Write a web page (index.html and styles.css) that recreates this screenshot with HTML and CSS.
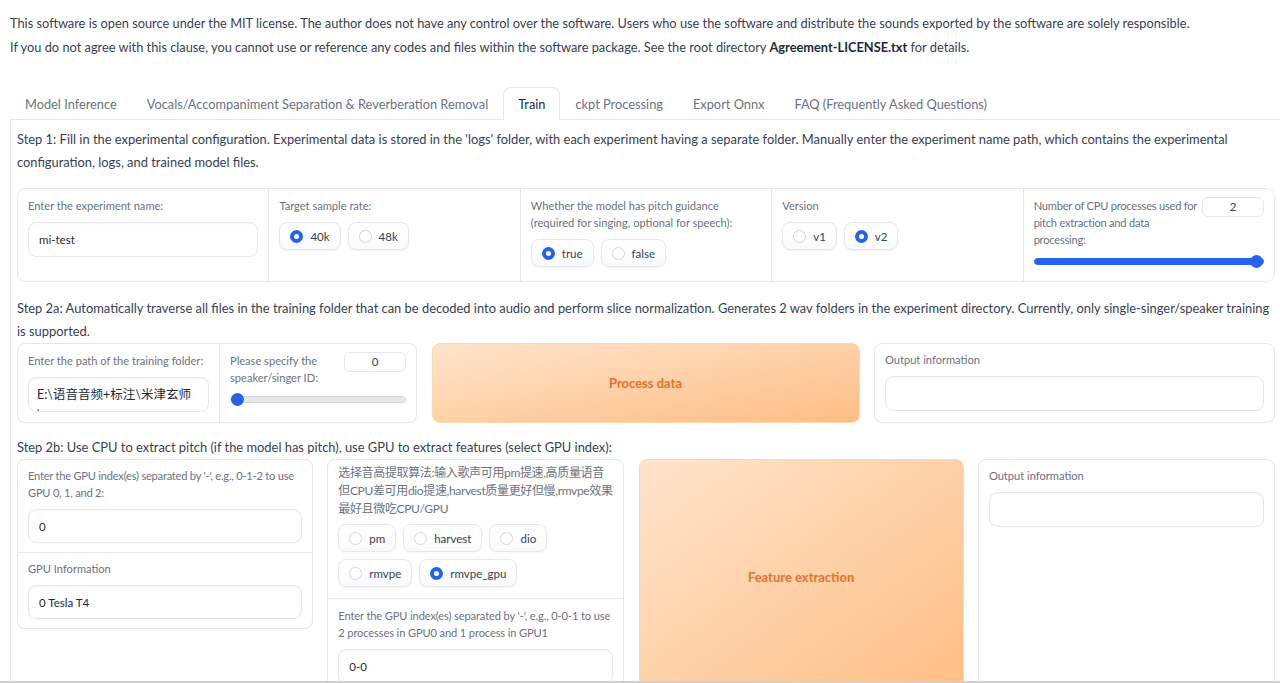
FILE: index.html
```html
<!DOCTYPE html>
<html lang="en">
<head>
<meta charset="utf-8">
<title>RVC WebUI - Train</title>
<link rel="stylesheet" href="styles.css">
</head>
<body>
<div class="app">
  <div class="notice">
    <p>This software is open source under the MIT license. The author does not have any control over the software. Users who use the software and distribute the sounds exported by the software are solely responsible.</p>
    <p>If you do not agree with this clause, you cannot use or reference any codes and files within the software package. See the root directory <strong>Agreement-LICENSE.txt</strong> for details.</p>
  </div>

  <div class="tabs">
    <div class="tab-nav">
      <button class="tab">Model Inference</button>
      <button class="tab">Vocals/Accompaniment Separation &amp; Reverberation Removal</button>
      <button class="tab active">Train</button>
      <button class="tab">ckpt Processing</button>
      <button class="tab">Export Onnx</button>
      <button class="tab">FAQ (Frequently Asked Questions)</button>
    </div>

    <div class="tab-panel">
      <p class="step">Step 1: Fill in the experimental configuration. Experimental data is stored in the 'logs' folder, with each experiment having a separate folder. Manually enter the experiment name path, which contains the experimental configuration, logs, and trained model files.</p>

      <div class="group row1">
        <div class="cell">
          <div class="label">Enter the experiment name:</div>
          <div class="input">mi-test</div>
        </div>
        <div class="cell">
          <div class="label">Target sample rate:</div>
          <div class="radios">
            <label class="radio"><span class="dot checked"></span>40k</label>
            <label class="radio"><span class="dot"></span>48k</label>
          </div>
        </div>
        <div class="cell">
          <div class="label">Whether the model has pitch guidance (required for singing, optional for speech):</div>
          <div class="radios">
            <label class="radio"><span class="dot checked"></span>true</label>
            <label class="radio"><span class="dot"></span>false</label>
          </div>
        </div>
        <div class="cell">
          <div class="label">Version</div>
          <div class="radios">
            <label class="radio"><span class="dot"></span>v1</label>
            <label class="radio"><span class="dot checked"></span>v2</label>
          </div>
        </div>
        <div class="cell">
          <div class="slider-head">
            <div class="label tight">Number of CPU processes used for pitch extraction and data processing:</div>
            <div class="num">2</div>
          </div>
          <input class="range full" type="range" min="1" max="2" value="2">
        </div>
      </div>

      <p class="step step-2a">Step 2a: Automatically traverse all files in the training folder that can be decoded into audio and perform slice normalization. Generates 2 wav folders in the experiment directory. Currently, only single-singer/speaker training is supported.</p>

      <div class="row row2">
        <div class="group g2">
          <div class="cell c-path">
            <div class="label">Enter the path of the training folder:</div>
            <div class="input textarea">E:\语音音频+标注\米津玄师\src</div>
          </div>
          <div class="cell">
            <div class="slider-head">
              <div class="label">Please specify the speaker/singer ID:</div>
              <div class="num">0</div>
            </div>
            <input class="range empty" type="range" min="0" max="4" value="0">
          </div>
        </div>
        <button class="primary btn-process">Process data</button>
        <div class="block out2">
          <div class="label">Output information</div>
          <div class="input"></div>
        </div>
      </div>

      <p class="step step-2b">Step 2b: Use CPU to extract pitch (if the model has pitch), use GPU to extract features (select GPU index):</p>

      <div class="row row3">
        <div class="group vgroup c1">
          <div class="cell">
            <div class="label tight">Enter the GPU index(es) separated by '-', e.g., 0-1-2 to use GPU 0, 1, and 2:</div>
            <div class="input">0</div>
          </div>
          <div class="cell">
            <div class="label">GPU Information</div>
            <div class="input">0 Tesla T4</div>
          </div>
        </div>
        <div class="group vgroup c2">
          <div class="cell cell-cjk">
            <div class="label cjk">选择音高提取算法:输入歌声可用pm提速,高质量语音但CPU差可用dio提速,harvest质量更好但慢,rmvpe效果最好且微吃CPU/GPU</div>
            <div class="radios">
              <label class="radio"><span class="dot"></span>pm</label>
              <label class="radio"><span class="dot"></span>harvest</label>
              <label class="radio"><span class="dot"></span>dio</label>
              <label class="radio"><span class="dot"></span>rmvpe</label>
              <label class="radio"><span class="dot checked"></span>rmvpe_gpu</label>
            </div>
          </div>
          <div class="cell">
            <div class="label semi-tight">Enter the GPU index(es) separated by '-', e.g., 0-0-1 to use 2 processes in GPU0 and 1 process in GPU1</div>
            <div class="input">0-0</div>
          </div>
        </div>
        <button class="primary btn-feature">Feature extraction</button>
        <div class="block out3">
          <div class="label">Output information</div>
          <div class="input"></div>
        </div>
      </div>
    </div>
  </div>
</div>
<div class="frame-edge"></div>
</body>
</html>
```

FILE: styles.css
```css
* { box-sizing: border-box; }

html { overflow: hidden; }

body {
  margin: 0;
  background: #ffffff;
  color: #374151;
  font-family: "Lato", "Noto Sans CJK SC", sans-serif;
  font-size: 12.8px;
}

.app {
  width: 1282px;
  padding: 11px 0 0 10px;
}

.frame-edge {
  position: fixed;
  left: 0;
  right: 0;
  bottom: 0;
  height: 2px;
  background: #cfcfcf;
}

.notice p {
  margin: 0;
  line-height: 24px;
  font-size: 12.8px;
  color: #374151;
}
.notice strong { color: #1f2937; font-weight: 700; }

.tabs { margin-top: 28px; }

.tab-nav {
  display: flex;
  height: 33px;
  border-bottom: 1px solid #e5e7eb;
}

.tab {
  font: inherit;
  font-size: 12.8px;
  color: #6b7280;
  background: none;
  border: 1px solid transparent;
  border-bottom: none;
  border-radius: 8px 8px 0 0;
  padding: 0 14px;
  height: 33px;
  cursor: pointer;
}
.tab.active {
  background: #ffffff;
  border-color: #e5e7eb;
  color: #1f2937;
}

.tab-panel {
  border: 1px solid #e5e7eb;
  border-top: none;
  padding: 8px 6px 0;
  min-height: 700px;
}

.step {
  margin: 0;
  font-size: 12.9px;
  line-height: 23px;
  color: #374151;
}
.step-2a { margin-top: 15px; }
.step-2b { margin-top: 13px; margin-bottom: 0; }

.group {
  display: flex;
  border: 1px solid #e5e7eb;
  border-radius: 8px;
  background: #fff;
  overflow: hidden;
}
.group > .cell + .cell { border-left: 1px solid #e5e7eb; }
.vgroup { flex-direction: column; }
.vgroup > .cell + .cell { border-left: none; border-top: 1px solid #e5e7eb; }

.row1 { margin-top: 14px; }
.row1 > .cell { flex: 1 1 0; min-width: 0; padding-bottom: 13px; }

.cell { padding: 8px 10px 10px; }

.label {
  font-size: 11.1px;
  line-height: 17px;
  color: #6b7280;
  margin-bottom: 8px;
}
.label.tight { letter-spacing: -0.22px; }
.label.semi-tight { letter-spacing: -0.12px; }

.input {
  height: 35px;
  border: 1px solid #e5e7eb;
  border-radius: 8px;
  padding: 0 10px;
  display: flex;
  align-items: center;
  font-size: 11.5px;
  color: #1f2937;
  background: #fff;
  box-shadow: inset 0 1px 2px rgba(0, 0, 0, 0.04);
}

.textarea {
  display: block;
  padding: 7px 8px;
  line-height: 20px;
  font-size: 12.5px;
  overflow: hidden;
}

.radios {
  display: flex;
  flex-wrap: wrap;
  gap: 7px;
}

.radio {
  display: flex;
  align-items: center;
  gap: 7px;
  height: 28px;
  padding: 0 10px 0 10px;
  border: 1px solid #e5e7eb;
  border-radius: 8px;
  background: linear-gradient(#ffffff, #f9fafb);
  box-shadow: 0 1px 2px rgba(0, 0, 0, 0.05);
  font-size: 11.5px;
  color: #374151;
}

.dot {
  width: 13px;
  height: 13px;
  border-radius: 50%;
  border: 1px solid #d1d5db;
  background: #fff;
}
.dot.checked {
  border: 4px solid #2563eb;
}

.slider-head {
  display: flex;
  align-items: flex-start;
  gap: 2px;
}
.slider-head .label { flex: 1; margin-bottom: 0; }

.num {
  width: 62px;
  height: 20px;
  flex: none;
  border: 1px solid #e5e7eb;
  border-radius: 6px;
  font-size: 11.5px;
  color: #374151;
  text-align: center;
  line-height: 18px;
}

.range {
  -webkit-appearance: none;
  appearance: none;
  display: block;
  width: 100%;
  height: 13px;
  margin: 7px 0 0;
  background: transparent;
}
.range::-webkit-slider-runnable-track {
  height: 7px;
  border-radius: 4px;
  background: #e5e7eb;
  border: 1px solid #d1d5db;
}
.range.full::-webkit-slider-runnable-track {
  background: #2563eb;
  border-color: #2563eb;
}
.range::-webkit-slider-thumb {
  -webkit-appearance: none;
  width: 13px;
  height: 13px;
  border-radius: 50%;
  background: #2563eb;
  margin-top: -4px;
}

.row {
  display: flex;
  gap: 14.5px;
}

.g2 { width: 400px; flex: none; }
.g2 .c-path { width: 201px; flex: none; }
.g2 .cell:last-child { flex: 1; min-width: 0; }

.primary {
  font: inherit;
  font-size: 13px;
  font-weight: 700;
  color: #e9702a;
  border: 1px solid #fed7aa;
  border-radius: 8px;
  background: linear-gradient(to bottom right, #fee4cc, #fdbe84);
  cursor: pointer;
}
.btn-process { width: 428px; flex: none; }

.block {
  border: 1px solid #e5e7eb;
  border-radius: 8px;
  padding: 7px 10px 10px;
  background: #fff;
}
.out2 { flex: 1; }

.row3 { gap: 14.3px; }
.c1 { width: 296px; flex: none; align-self: flex-start; }
.c1 > .cell { padding-top: 7px; padding-bottom: 9px; }
.c1 .input { height: 34px; }
.c2 { width: 297px; flex: none; }
.btn-feature { width: 325px; flex: none; }
.out3 { flex: 1; }

.cell-cjk { padding-top: 4px; padding-bottom: 11px; }

.cjk {
  font-size: 12px;
  line-height: 18px;
  letter-spacing: -0.35px;
  margin-bottom: 6px;
}
```
